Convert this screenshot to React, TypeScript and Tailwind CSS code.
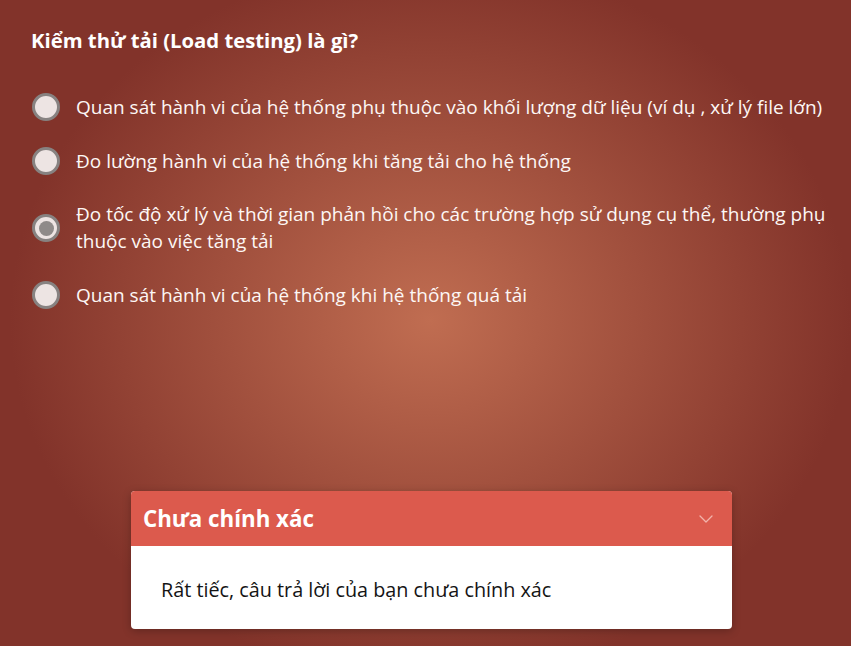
import { ChevronDown } from "lucide-react";

const options = [
  "Quan sát hành vi của hệ thống phụ thuộc vào khối lượng dữ liệu (ví dụ , xử lý file lớn)",
  "Đo lường hành vi của hệ thống khi tăng tải cho hệ thống",
  "Đo tốc độ xử lý và thời gian phản hồi cho các trường hợp sử dụng cụ thể, thường phụ thuộc vào việc tăng tải",
  "Quan sát hành vi của hệ thống khi hệ thống quá tải",
];

const selected = 2;

const Radio = ({ checked }: { checked: boolean }) => (
  <span className="flex h-[28px] w-[28px] shrink-0 items-center justify-center rounded-full border-[3px] border-[#878281] bg-[#ede4e3]">
    {checked && <span className="h-[15px] w-[15px] rounded-full bg-[#8f8a89]" />}
  </span>
);

export default function App() {
  return (
    <div
      className="flex h-[646px] w-full flex-col overflow-hidden bg-[radial-gradient(ellipse_420px_360px_at_430px_320px,#c06d51_0%,#82332a_100%)] text-white"
      style={{ fontFamily: '"Open Sans", "Noto Sans", sans-serif' }}
    >
      <h1 className="pl-[31px] pt-[26px] text-[20.3px] font-bold leading-[28px]">
        Kiểm thử tải (Load testing) là gì?
      </h1>

      <div className="mt-[39px] flex flex-col gap-[26px] pl-[32px] pr-[12px]">
        {options.map((text, i) => (
          <label key={i} className="flex items-center gap-[16px]">
            <Radio checked={i === selected} />
            <span className="text-[19px] leading-[27px] text-[#fdf7f5]">{text}</span>
          </label>
        ))}
      </div>

      <div className="mt-auto mb-[17px] ml-[131px] w-[601px] overflow-hidden rounded-[4px] bg-white shadow-[0_2px_8px_rgba(0,0,0,0.25)]">
        <div className="flex h-[55px] items-center justify-between bg-[#dc5a4d] pl-[12px] pr-[14px]">
          <span className="text-[22.3px] font-bold text-white">Chưa chính xác</span>
          <ChevronDown className="h-6 w-6 text-[#f2b3ab]" strokeWidth={1.3} />
        </div>
        <div className="px-[30px] pb-[25px] pt-[30px] text-[19.8px] leading-[28px] text-[#141414]">
          Rất tiếc, câu trả lời của bạn chưa chính xác
        </div>
      </div>
    </div>
  );
}
